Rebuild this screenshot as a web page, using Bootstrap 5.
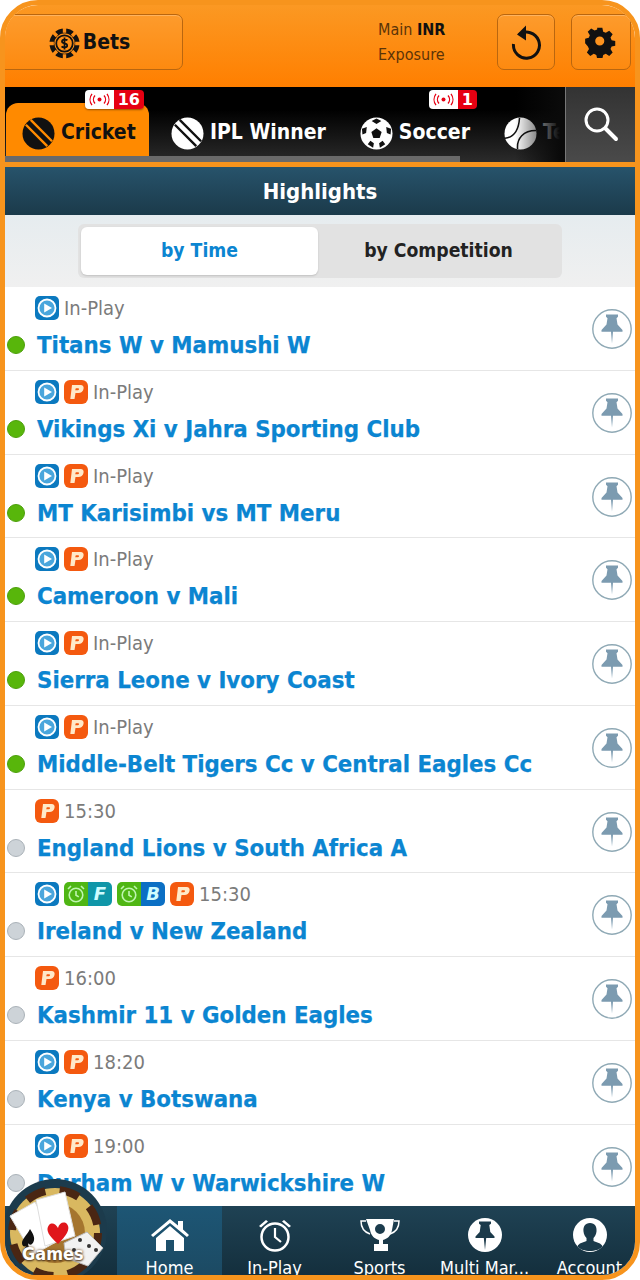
<!DOCTYPE html>
<html lang="en">
<head>
<meta charset="utf-8"/>
<meta content="width=device-width, initial-scale=1.0" name="viewport"/>
<title>Highlights</title>
<link href="https://cdn.jsdelivr.net/npm/bootstrap@5.3.0/dist/css/bootstrap.min.css" rel="stylesheet"/>
<style>
  html, body { margin: 0; height: 1280px; background: #fff; overflow: hidden; }
  body { font-family: "DejaVu Sans Condensed", "DejaVu Sans", sans-serif; }
  .frame { position: relative; height: 1280px; border: 5px solid #f7941d; border-radius: 38px; overflow: hidden; background: #fff; }
  .top-head { height: 73px; margin: -5px -5px 0; padding: 14px 9px 0 0; background: linear-gradient(#fb9a25, #ff7f00); box-sizing: content-box; flex: none; }
  .head-btn { height: 56px; border: 1px solid #b9660f; border-radius: 7px; background: linear-gradient(#fd9b2c, #fd8a10); box-shadow: inset 0 1px 0 #ffb35e; color: #111; }
  .bets-btn { width: 183px; border-radius: 0 7px 7px 0; font-size: 21px; font-weight: 700; gap: 3px; padding: 2px 4px 0 0; }
  .sq-btn { width: 58px; }
  .funds { margin-left: 195px; width: 119px; font-size: 16px; color: #5b3408; line-height: 25px; padding-top: 3px; }
  .funds b { color: #111; }
  .tab-bar { height: 75px; flex: none; background: linear-gradient(#000 30%, #2b2b2b); }
  .tab-scroll { flex: 1; min-width: 0; overflow: hidden; position: relative; }
  .tab-scroll::before { content: ""; position: absolute; left: 0; bottom: 0; width: 455px; height: 6px; background: #6a6a6a; z-index: 2; }
  .tab-scroll::after { content: ""; position: absolute; right: 0; top: 0; bottom: 0; width: 50px; background: linear-gradient(90deg, transparent, #0a0a0a 90%); z-index: 1; }
  .tab-item { position: relative; height: 54px; margin-top: 16px; padding: 6px 12px 0 22px; white-space: nowrap; flex: none; gap: 6px; color: #fff; font-size: 21px; font-weight: 700; }
  .tab-item.current { width: 143px; margin-left: 1px; background: #ff8a00; color: #111; border-radius: 12px 12px 0 0; padding: 6px 0 0 16px; }
  .live-tag { position: absolute; top: -13px; height: 19px; display: flex; border-radius: 4px; overflow: hidden; font-size: 16px; line-height: 19px; color: #fff; font-weight: 700; font-family: "DejaVu Sans", sans-serif; box-shadow: 0 1px 2px rgba(0,0,0,.4); }
  .live-tag i { display: flex; align-items: center; justify-content: center; width: 29px; background: #fff; }
  .live-tag span { background: #e60012; padding: 0 4px; flex: 1; text-align: center; }
  .find-box { width: 70px; flex: none; border-left: 1px solid #777; background: linear-gradient(#333, #4a4a4a); padding-top: 19px; text-align: center; z-index: 3; height: 75px; }
  .orange-gap { height: 5px; flex: none; background: #f7941d; }
  .hl-title { height: 48px; flex: none; background: linear-gradient(#27536b, #1b3a4a); color: #fff; font-size: 22px; font-weight: 700; }
  .toggle-zone { height: 72px; flex: none; background: linear-gradient(#e6ecef, #f0f0f0); padding-top: 9px; }
  .toggle-box { width: 484px; height: 54px; padding: 3px; background: #e2e2e2; border-radius: 6px; font-size: 19.200px; font-weight: 700; }
  .toggle-box > div { height: 48px; border-radius: 6px; }
  .toggle-on { width: 237px; background: #fff; color: #0b85d1; box-shadow: 0 1px 2px rgba(0,0,0,.15); }
  .toggle-off { flex: 1; color: #222; }
  .evt-list { flex: 1; min-height: 0; overflow: hidden; }
  .evt-row { position: relative; height: 83.75px; border-bottom: 1px solid #e6e6e6; padding: 9px 0 0 30px; box-sizing: border-box; }
  .evt-meta { height: 24px; gap: 5px; font-size: 20px; color: #7b7b7b; line-height: 24px; }
  .evt-name { margin-top: 7px; font-size: 23.750px; line-height: 36px; font-weight: 700; color: #0b85d1; white-space: nowrap; padding-left: 2px; -webkit-text-stroke: .25px #0b85d1; }
  .state-dot { position: absolute; left: 2px; top: 49px; width: 18px; height: 18px; border-radius: 50%; background: #cdd3d8; border: 1px solid #aab2b8; }
  .state-dot.on { background: #58b60b; border-color: #4da00b; }
  .pin-round { position: absolute; right: 3px; top: 22px; }
  .ic-box { width: 24px; height: 24px; flex: none; }
  .pair-box { width: 48px; height: 24px; flex: none; display: flex; border-radius: 5px; overflow: hidden; }
  .pair-box span { width: 24px; display: flex; align-items: center; justify-content: center; background: #4fb614; }
  .pair-box b { width: 24px; color: #cffcff; font-style: italic; font-size: 18px; line-height: 24px; text-align: center; font-family: "DejaVu Sans", sans-serif; }
  .bottom-nav { height: 69px; flex: none; background: linear-gradient(#1f4254, #142f3d); padding-left: 112px; position: relative; }
  .nav-cell { width: 105px; flex: none; height: 69px; color: #fff; font-size: 18px; padding-top: 12px; overflow: hidden; white-space: nowrap; line-height: 22px; }
  .nav-cell svg { display: block; margin-bottom: 5px; flex: none; }
  .nav-cell.picked { background: linear-gradient(#1d5675, #1c4a63); }
  .games-chip { position: absolute; left: -3px; bottom: -7px; width: 112px; height: 104px; z-index: 5; }
  .games-txt { position: absolute; left: 20px; top: 62px; font-size: 18px; font-weight: 700; color: #fff; text-shadow: 0 0 3px #6b4a2a, 0 1px 2px #3a2a1a; }
</style>
</head>
<body>
<svg width="0" height="0" class="d-none">
  <defs>
    <symbol id="s-play" viewBox="0 0 24 24"><rect width="24" height="24" rx="5" fill="#0b79bf"/><circle cx="12" cy="12" r="8.500" fill="#4aa6dc" stroke="#fff" stroke-width="1.800"/><path d="M9.200 7.400 17 12l-7.800 4.600z" fill="#fff"/></symbol>
    <symbol id="s-p" viewBox="0 0 24 24"><rect width="24" height="24" rx="6" fill="#f4590f"/><path d="M8 5h8.500c2.600 0 3.600 1.800 3 4-.6 2.600-2.500 4-5 4h-3l-1 6H6.300zM11.800 8.300l-.6 2h2.600c1.400 0 1.700-2 .3-2z" fill="#ffe9c9" fill-rule="evenodd"/></symbol>
    <symbol id="s-clock" viewBox="0 0 20 20"><circle cx="10" cy="11" r="6.800" fill="none" stroke="#bff5b0" stroke-width="1.600"/><path d="M10 7v4.300l2.800 1.600M2 5l3-3M18 5l-3-3" fill="none" stroke="#bff5b0" stroke-width="1.600"/></symbol>
    <symbol id="s-pin" viewBox="0 0 40 40"><circle cx="20" cy="20" r="19.200" fill="#fff" stroke="#8fa9b5" stroke-width="1.400"/><path d="M14 5.500h12v2.300l-1.500 1.500 1 6.200 5 5.500v1.700H9.500V21l5-5.500 1-6.200L14 7.800zM19 22.500h2l-1 12z" fill="#7c9bb0"/></symbol>
  </defs>
</svg>
<div class="frame d-flex flex-column">
  <div class="top-head d-flex">
    <div class="head-btn bets-btn d-flex align-items-center justify-content-center">
      <svg width="31" height="31" viewBox="0 0 32 32"><circle cx="16" cy="16" r="15.500" fill="#111"/><circle cx="16" cy="16" r="10.500" fill="#fd8f18"/><g stroke="#fd8f18" stroke-width="3.500"><path d="M16 0v5M16 27v5M0 16h5M27 16h5M4.700 4.700l3.500 3.500M23.800 23.800l3.500 3.500M27.300 4.700l-3.500 3.500M8.200 23.800l-3.500 3.500"/></g><circle cx="16" cy="16" r="8.500" fill="none" stroke="#111" stroke-width="1.800"/><path d="M19 12.800c-1-1.200-5.600-1.500-5.600 1.200 0 2.700 5.400 1.200 5.400 4 0 2.600-4.700 2.400-5.800 1M16 9.700v12.600" fill="none" stroke="#111" stroke-width="1.800"/></svg>
      <span>Bets</span>
    </div>
    <div class="funds">
      <div>Main <b>INR</b></div>
      <div>Exposure</div>
    </div>
    <div class="head-btn sq-btn d-flex align-items-center justify-content-center">
      <svg width="32" height="36" viewBox="0 0 32 36"><path d="M9 10.500a13 13 0 1 1-5.500 9.500" fill="none" stroke="#111" stroke-width="3"/><path d="M16 1.500 7 10.500l9 6z" fill="#111"/></svg>
    </div>
    <div class="head-btn sq-btn d-flex align-items-center justify-content-center" style="margin-left:16px;width:60px">
      <svg width="32" height="32" viewBox="0 0 32 32"><path fill="#111" fill-rule="evenodd" d="M13 1h6l1 4.500 3 1.300 4-2.500 4 4-2.500 4 1.300 3 4.200 1v5.400l-4.200 1-1.300 3 2.500 4-4 4-4-2.500-3 1.300-1 4.500h-6l-1-4.500-3-1.300-4 2.500-4-4 2.500-4-1.300-3L-1 19v-5.400l4.200-1 1.300-3-2.500-4 4-4 4 2.500 3-1.300zM16 11a5.300 5.300 0 1 0 0 10.600A5.300 5.300 0 0 0 16 11z" transform="translate(1 1) scale(.86)"/></svg>
    </div>
  </div>

  <div class="tab-bar d-flex">
    <div class="tab-scroll d-flex">
      <div class="tab-item current d-flex align-items-center">
        <svg width="33" height="33" viewBox="0 0 34 34"><circle cx="17" cy="17" r="16.500" fill="#111"/><path d="M9 3 31 25M4 8 26 30" stroke="#ff8a00" stroke-width="2.500"/></svg>
        <span>Cricket</span>
        <div class="live-tag" style="left:79px;width:59px"><i><svg width="25" height="13" viewBox="0 0 25 13"><circle cx="12.500" cy="6.500" r="2" fill="#e60012"/><path d="M8 2.500a6 6 0 0 0 0 8M5 .8a9.500 9.500 0 0 0 0 11.400M17 2.500a6 6 0 0 1 0 8M20 .8a9.500 9.500 0 0 1 0 11.400" fill="none" stroke="#e60012" stroke-width="1.300"/></svg></i><span>16</span></div>
      </div>
      <div class="tab-item d-flex align-items-center">
        <svg width="33" height="33" viewBox="0 0 34 34"><circle cx="17" cy="17" r="16.500" fill="#fff"/><path d="M9 3 31 25M4 8 26 30" stroke="#111" stroke-width="2.500"/></svg>
        <span>IPL Winner</span>
      </div>
      <div class="tab-item d-flex align-items-center">
        <svg width="33" height="33" viewBox="0 0 34 34"><circle cx="17" cy="17" r="16.500" fill="#fff"/><path d="M17 11.500l5.300 3.900-2 6.200h-6.600l-2-6.200z" fill="#111"/><path d="M17 1.500l5 2.500-5 3.300-5-3.300zM32 12l-.5 6-3.800-1.500-.7-6.200zM2 12l.5 6 3.800-1.500.7-6.200zM8 28l5.500 3.800.8-4.800-3.600-2.500zM26 28l-5.500 3.800-.8-4.800 3.600-2.500z" fill="#111"/></svg>
        <span>Soccer</span>
        <div class="live-tag" style="left:91px;width:48px"><i><svg width="25" height="13" viewBox="0 0 25 13"><circle cx="12.500" cy="6.500" r="2" fill="#e60012"/><path d="M8 2.500a6 6 0 0 0 0 8M5 .8a9.500 9.500 0 0 0 0 11.400M17 2.500a6 6 0 0 1 0 8M20 .8a9.500 9.500 0 0 1 0 11.400" fill="none" stroke="#e60012" stroke-width="1.300"/></svg></i><span>1</span></div>
      </div>
      <div class="tab-item d-flex align-items-center">
        <svg width="33" height="33" viewBox="0 0 34 34"><circle cx="17" cy="17" r="16.500" fill="#fff"/><path d="M1 22c8-1 14-6 15-21M14 33c-1-11 6-19 19-19" fill="none" stroke="#111" stroke-width="1.600"/></svg>
        <span>Te</span>
      </div>
    </div>
    <div class="find-box">
      <svg width="36" height="36" viewBox="0 0 36 36"><circle cx="14" cy="14" r="11" fill="none" stroke="#fff" stroke-width="3"/><path d="M22.500 22.500 33 33" stroke="#fff" stroke-width="4" stroke-linecap="round"/></svg>
    </div>
  </div>
  <div class="orange-gap"></div>
  <div class="hl-title d-flex align-items-center justify-content-center">Highlights</div>
  <div class="toggle-zone">
    <div class="toggle-box d-flex mx-auto">
      <div class="toggle-on d-flex align-items-center justify-content-center">by Time</div>
      <div class="toggle-off d-flex align-items-center justify-content-center">by Competition</div>
    </div>
  </div>
  <div class="evt-list" id="events"></div>
  <div class="bottom-nav d-flex">
    <div class="games-chip">
      <svg width="112" height="104" viewBox="0 0 112 104">
        <circle cx="53" cy="53" r="52" fill="#1c3b4c"/>
        <circle cx="53" cy="55" r="45" fill="#d9b860"/>
        <circle cx="53" cy="55" r="43" fill="none" stroke="#4a2613" stroke-width="8" stroke-dasharray="20 14.500"/>
        <circle cx="53" cy="55" r="30" fill="#a5752e"/>
        <path d="M8 38 33 24l21 40-23 13z" fill="#fff" stroke="#ddd"/>
        <path d="M34 22l29-8 10 44-30 10z" fill="#fff" stroke="#ddd"/>
        <path d="M28 51c4 6 6 11 2 15-1 1-3 1-4-1l1 6-6 2 3-5c-2 1-4 0-4-3 0-4 5-8 8-14z" fill="#111"/>
        <path d="M56 66c-9-8-13-14-9-19 3-3 7-1 9 3 1-5 6-7 9-4 4 5-1 12-9 20z" fill="#e0161b"/>
        <path d="M62 65 85 54l16 16-15 18-22-8z" fill="#f2f2f2" stroke="#bbb"/>
        <g fill="#333"><circle cx="78" cy="62" r="2"/><circle cx="87" cy="68" r="2"/><circle cx="72" cy="72" r="2"/><circle cx="94" cy="72" r="2"/></g>
      </svg>
      <div class="games-txt">Games</div>
    </div>
    <div class="nav-cell picked d-flex flex-column align-items-center">
      <svg width="40" height="34" viewBox="0 0 40 34"><path d="M1 17 20 1l8 6.500V3h5v8.500L39 17l-2 2L20 5 3 19z" fill="#fff"/><path d="M6 20 20 8l14 12v13H24V22h-8v11H6z" fill="#fff"/></svg>
      <span>Home</span>
    </div>
    <div class="nav-cell d-flex flex-column align-items-center">
      <svg width="36" height="34" viewBox="0 0 36 34"><circle cx="18" cy="19" r="13.500" fill="none" stroke="#fff" stroke-width="2.500"/><path d="M18 10v9l6 5" fill="none" stroke="#fff" stroke-width="2.200"/><path d="M2 8 9 2l2 1.500-7 6zM34 8l-7-6-2 1.500 7 6z" fill="#fff"/></svg>
      <span>In-Play</span>
    </div>
    <div class="nav-cell d-flex flex-column align-items-center">
      <svg width="40" height="34" viewBox="0 0 40 34"><path fill="#fff" fill-rule="evenodd" d="M6 1h28l-2 11c-1 6-5 9-9 10v4h5v7H14v-7h5v-4c-4-1-8-4-9-10zM20 6a5 5 0 1 0 0 10 5 5 0 0 0 0-10z"/><path d="M6 3H1c0 7 3 11 9 13M34 3h5c0 7-3 11-9 13" fill="none" stroke="#fff" stroke-width="1.500"/></svg>
      <span>Sports</span>
    </div>
    <div class="nav-cell d-flex flex-column align-items-center">
      <svg width="34" height="34" viewBox="0 0 34 34"><circle cx="17" cy="17" r="17" fill="#fff"/><path d="M11 3.500h12v2.300l-1.700 1.200 1 7 4.200 4.500v1.500H7.500V18.500l4.200-4.500 1-7L11 5.800zM15.800 20h2.400L17 32z" fill="#1b3a4a"/></svg>
      <span>Multi Mar...</span>
    </div>
    <div class="nav-cell d-flex flex-column align-items-center">
      <svg width="34" height="34" viewBox="0 0 34 34"><circle cx="17" cy="17" r="17" fill="#fff"/><path d="M17 5c5 0 7 4 6.500 8.500-.3 3-1.500 5-3 6.500v3c3 1.500 8 2 9 5.500C27 31.500 22 33 17 33S7 31.500 4.500 28.500c1-3.500 6-4 9-5.500v-3c-1.500-1.500-2.700-3.500-3-6.500C10 9 12 5 17 5z" fill="#1b3a4a"/></svg>
      <span>Account</span>
    </div>
  </div>
</div>
<script>
  const events = [
    { name: 'Titans W v Mamushi W', live: true, icons: ['play'], label: 'In-Play' },
    { name: 'Vikings Xi v Jahra Sporting Club', live: true, icons: ['play', 'p'], label: 'In-Play' },
    { name: 'MT Karisimbi vs MT Meru', live: true, icons: ['play', 'p'], label: 'In-Play' },
    { name: 'Cameroon v Mali', live: true, icons: ['play', 'p'], label: 'In-Play' },
    { name: 'Sierra Leone v Ivory Coast', live: true, icons: ['play', 'p'], label: 'In-Play' },
    { name: 'Middle-Belt Tigers Cc v Central Eagles Cc', live: true, icons: ['play', 'p'], label: 'In-Play' },
    { name: 'England Lions v South Africa A', live: false, icons: ['p'], label: '15:30' },
    { name: 'Ireland v New Zealand', live: false, icons: ['play', 'f', 'b', 'p'], label: '15:30' },
    { name: 'Kashmir 11 v Golden Eagles', live: false, icons: ['p'], label: '16:00' },
    { name: 'Kenya v Botswana', live: false, icons: ['play', 'p'], label: '18:20' },
    { name: 'Durham W v Warwickshire W', live: false, icons: ['play', 'p'], label: '19:00' }
  ];

  function iconHtml(kind) {
    if (kind === 'f' || kind === 'b') {
      const bg = kind === 'f' ? '#0f96a8' : '#0b6fc4';
      return `<div class="pair-box"><span><svg width="20" height="20"><use href="#s-clock"/></svg></span><b style="background:${bg}">${kind.toUpperCase()}</b></div>`;
    }
    return `<svg class="ic-box"><use href="#s-${kind}"/></svg>`;
  }

  document.getElementById('events').innerHTML = events.map(ev => `
    <div class="evt-row">
      <div class="evt-meta d-flex">${ev.icons.map(iconHtml).join('')}<span>${ev.label}</span></div>
      <div class="evt-name">${ev.name}</div>
      <div class="state-dot ${ev.live ? 'on' : ''}"></div>
      <svg class="pin-round" width="40" height="40"><use href="#s-pin"/></svg>
    </div>`).join('');
</script>
<script src="https://cdn.jsdelivr.net/npm/bootstrap@5.3.0/dist/js/bootstrap.bundle.min.js"></script>
</body>
</html>
